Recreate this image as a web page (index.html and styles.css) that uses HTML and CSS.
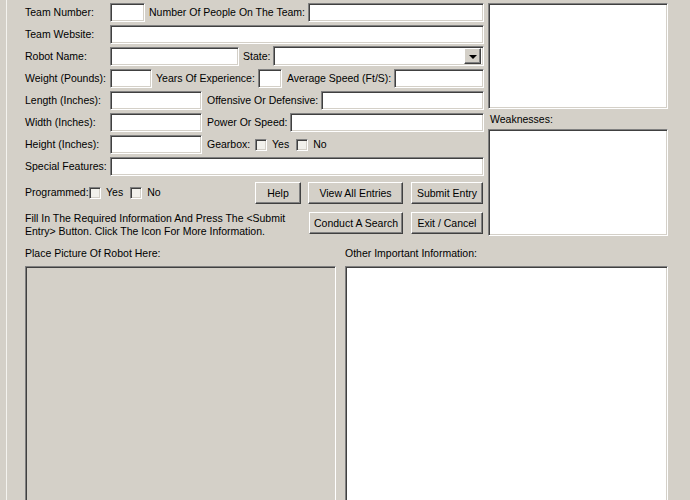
FILE: index.html
```html
<!DOCTYPE html>
<html lang="en">
<head>
    <meta charset="UTF-8">
    <title>Robot Entry Form</title>
    <link rel="stylesheet" href="styles.css">
</head>
<body>
    <div class="frame">
        <div class="top">
            <div class="form">
                <div class="row">
                    <label class="lbl">Team Number:</label>
                    <input class="field w35" type="text">
                    <label class="lbl l-people">Number Of People On The Team:</label>
                    <input class="field grow" type="text">
                </div>
                <div class="row">
                    <label class="lbl">Team Website:</label>
                    <input class="field grow" type="text">
                </div>
                <div class="row">
                    <label class="lbl">Robot Name:</label>
                    <input class="field w129" type="text">
                    <label class="lbl l-state">State:</label>
                    <div class="field select grow">
                        <span class="drop"><span class="arrow"></span></span>
                    </div>
                </div>
                <div class="row">
                    <label class="lbl">Weight (Pounds):</label>
                    <input class="field w42" type="text">
                    <label class="lbl l-years">Years Of Experience:</label>
                    <input class="field w24" type="text">
                    <label class="lbl l-speed">Average Speed (Ft/S):</label>
                    <input class="field grow" type="text">
                </div>
                <div class="row">
                    <label class="lbl">Length (Inches):</label>
                    <input class="field w92" type="text">
                    <label class="lbl l-off">Offensive Or Defensive:</label>
                    <input class="field grow" type="text">
                </div>
                <div class="row">
                    <label class="lbl">Width (Inches):</label>
                    <input class="field w92" type="text">
                    <label class="lbl l-power">Power Or Speed:</label>
                    <input class="field grow" type="text">
                </div>
                <div class="row">
                    <label class="lbl">Height (Inches):</label>
                    <input class="field w92" type="text">
                    <label class="lbl l-gear">Gearbox:</label>
                    <span class="chk"></span><span class="opt">Yes</span>
                    <span class="chk"></span><span class="opt">No</span>
                </div>
                <div class="row">
                    <label class="lbl">Special Features:</label>
                    <input class="field grow" type="text">
                </div>
                <div class="row row-btn">
                    <label class="lbl l-prog">Programmed:</label>
                    <span class="chk"></span><span class="opt">Yes</span>
                    <span class="chk"></span><span class="opt">No</span>
                    <div class="buttons">
                        <button class="btn b-help">Help</button>
                        <button class="btn b-view">View All Entries</button>
                        <button class="btn b-submit">Submit Entry</button>
                    </div>
                </div>
                <div class="row row-info">
                    <p class="info">Fill In The Required Information And Press The &lt;Submit Entry&gt; Button. Click The Icon For More Information.</p>
                    <div class="buttons">
                        <button class="btn b-search">Conduct A Search</button>
                        <button class="btn b-submit">Exit / Cancel</button>
                    </div>
                </div>
            </div>
            <div class="side">
                <textarea class="field area strengths"></textarea>
                <div class="side-label">Weaknesses:</div>
                <textarea class="field area weak"></textarea>
            </div>
        </div>
        <div class="bottom">
            <div class="pane pane-pic">
                <div class="pane-label">Place Picture Of Robot Here:</div>
                <div class="field picture"></div>
            </div>
            <div class="pane pane-other">
                <div class="pane-label">Other Important Information:</div>
                <textarea class="field area other"></textarea>
            </div>
        </div>
    </div>
</body>
</html>
```

FILE: styles.css
```css
* {
    margin: 0;
    padding: 0;
    box-sizing: border-box;
}

body {
    font-family: 'Liberation Sans', Arial, sans-serif;
    font-size: 10.5px;
    background: #d4d0c8;
    color: #000;
    overflow: hidden;
}

.frame {
    margin-left: 6px;
    border-left: 1px solid #f4f3ef;
    padding: 3px 0 0 18px;
    height: 500px;
}

.top {
    display: flex;
    gap: 4px;
}

.form {
    width: 459px;
}

.row {
    display: flex;
    align-items: center;
    height: 19px;
    margin-bottom: 3px;
}

.lbl {
    width: 85px;
    white-space: nowrap;
    flex-shrink: 0;
    margin-top: -2px;
}

.l-people { width: 159px; margin-left: 4px; }
.l-state  { width: 30px;  margin-left: 4px; }
.l-years  { width: 102px; margin-left: 4px; }
.l-speed  { width: 107px; margin-left: 5px; }
.l-off    { width: 114px; margin-left: 5px; }
.l-power  { width: 83px;  margin-left: 5px; }
.l-gear   { width: 48px;  margin-left: 5px; }
.l-prog   { width: 64px; }

/* sunken win98 style box */
.field {
    display: block;
    height: 19px;
    background: #fff;
    border: 1px solid;
    border-color: #808080 #fff #fff #808080;
    box-shadow: inset 1px 1px 0 #404040, inset -1px -1px 0 #d4d0c8;
    font: inherit;
    padding: 0 3px;
    outline: none;
    flex-shrink: 0;
}

.grow { flex: 1 1 0; min-width: 0; }
.w24  { width: 24px; }
.w35  { width: 35px; }
.w42  { width: 42px; }
.w92  { width: 92px; }
.w129 { width: 129px; }

.select {
    display: flex;
    justify-content: flex-end;
    align-items: center;
    height: 20px;
    padding: 2px;
    margin-top: -1px;
}

.drop {
    width: 17px;
    height: 16px;
    background: #d4d0c8;
    border: 1px solid;
    border-color: #fff #404040 #404040 #fff;
    box-shadow: inset -1px -1px 0 #808080;
    display: flex;
    align-items: center;
    justify-content: center;
}

.arrow {
    width: 0;
    height: 0;
    border-left: 4px solid transparent;
    border-right: 4px solid transparent;
    border-top: 4px solid #000;
    margin-top: 1px;
}

.chk {
    width: 12px;
    height: 12px;
    background: #f2f1ec;
    border: 1px solid;
    border-color: #808080 #fff #fff #808080;
    box-shadow: inset 1px 1px 0 #404040, inset -1px -1px 0 #d4d0c8;
    flex-shrink: 0;
}

.opt {
    margin: -2px 7px 0 5px;
}

.row-btn {
    height: 22px;
    margin-top: 6px;
    margin-bottom: 0;
}

.row-info {
    height: auto;
    align-items: flex-start;
    margin-top: 8px;
}

.info {
    width: 270px;
    line-height: 13px;
}

.buttons {
    display: flex;
    gap: 8px;
    margin-left: auto;
    margin-right: 1px;
}

.btn {
    height: 22px;
    background: #d4d0c8;
    border: 1px solid;
    border-color: #fff #404040 #404040 #fff;
    box-shadow: inset -1px -1px 0 #808080;
    font: inherit;
    color: #000;
    padding: 0;
}

.b-help   { width: 46px; margin-right: -1px; }
.b-view   { width: 95px; }
.b-submit { width: 72px; }
.b-search { width: 94px; }

.side {
    width: 180px;
}

.area {
    width: 100%;
    resize: none;
    padding: 2px 3px;
}

.strengths { height: 106px; }
.weak      { height: 107px; }

.side-label {
    height: 20px;
    line-height: 13px;
    padding: 4px 0 0 2px;
}

.bottom {
    display: flex;
    gap: 9px;
    margin-top: 6px;
}

.pane-label {
    line-height: 13px;
    margin-bottom: 6px;
}

.pane-pic   { width: 311px; }
.pane-other { width: 323px; }

.picture {
    height: 240px;
    background: #d4d0c8;
}

.other {
    height: 240px;
}
```
